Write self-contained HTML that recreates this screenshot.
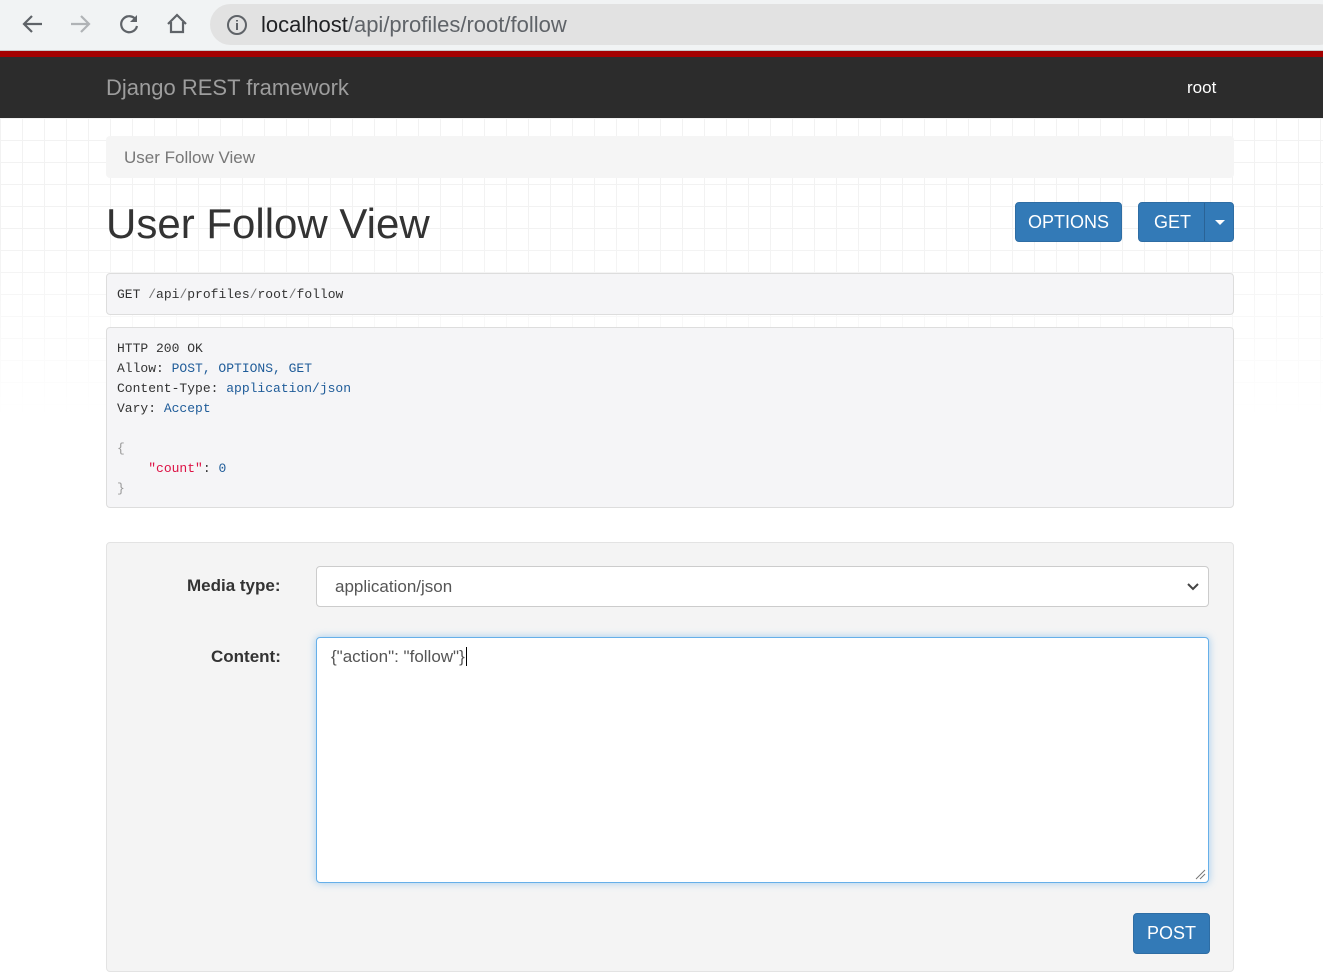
<!DOCTYPE html>
<html><head><meta charset="utf-8"><style>
*{box-sizing:border-box}
body{margin:0;width:1323px;height:963px;overflow:hidden;font-family:"Liberation Sans",Arial,sans-serif;background:#fff;position:relative}
.chrome{position:absolute;left:0;top:0;width:1323px;height:51px;background:#f1f3f4;border-bottom:1px solid #c8c8c8}
.url{position:absolute;left:210px;top:4px;width:1130px;height:41px;border-radius:21px;background:#e2e2e2}
.url span{position:absolute;left:51px;top:8px;font-size:22px;color:#5f6368}
.url b{font-weight:normal;color:#202124}
.red{position:absolute;top:51px;left:0;width:1323px;height:6px;background:#a30000}
.nav{position:absolute;top:57px;left:0;width:1323px;height:61px;background:#2c2c2c}
.grid{position:absolute;top:118px;left:0;width:1323px;height:300px;background-image:linear-gradient(#f2f2f2 1px,transparent 1px),linear-gradient(90deg,#f2f2f2 1px,transparent 1px);background-size:22px 22px;-webkit-mask-image:linear-gradient(#000 40%,transparent)}
.abs{position:absolute}
.btn{position:absolute;background:#337ab7;border:1px solid #2e6da4;border-radius:4px;color:#fff;font-size:18px;text-align:center}
pre{margin:0;font-family:"Liberation Mono","DejaVu Sans Mono",monospace;font-size:13px;line-height:20px;color:#333}
.b{color:#1f5c99}
</style></head><body>
<div class="chrome">
<svg class="abs" style="left:20px;top:12px" width="26" height="24" viewBox="0 0 26 24"><path d="M22 12H5M12 4l-8 8 8 8" stroke="#5f6368" stroke-width="2.2" fill="none"/></svg>
<svg class="abs" style="left:68px;top:12px" width="26" height="24" viewBox="0 0 26 24"><path d="M3 12h17M13 4l8 8-8 8" stroke="#b0b3b6" stroke-width="2.2" fill="none"/></svg>
<svg class="abs" style="left:117px;top:12px" width="24" height="24" viewBox="0 0 24 24"><path d="M19 8A8 8 0 1 0 20 14" stroke="#5f6368" stroke-width="2.2" fill="none"/><path d="M20 3v7h-7z" fill="#5f6368"/></svg>
<svg class="abs" style="left:164px;top:11px" width="26" height="26" viewBox="0 0 26 26"><path d="M4 13L13 4l9 9M7 11v10h12V11" stroke="#5f6368" stroke-width="2.2" fill="none"/></svg>
<div class="url"><svg class="abs" style="left:16px;top:10px" width="22" height="22" viewBox="0 0 22 22"><circle cx="11" cy="11" r="9" stroke="#5f6368" stroke-width="2" fill="none"/><path d="M11 9v7M11 6v1.5" stroke="#5f6368" stroke-width="2"/></svg><span><b>localhost</b>/api/profiles/root/follow</span></div>
</div>
<div class="red"></div>
<div class="nav"><div class="abs" style="left:106px;top:18px;font-size:22px;color:#9d9d9d">Django REST framework</div><div class="abs" style="left:1187px;top:21px;font-size:17px;color:#fff">root</div></div>
<div class="grid"></div>
<div class="abs" style="left:106px;top:136px;width:1128px;height:42px;background:#f5f5f5;border-radius:4px;font-size:17px;color:#777;padding:12px 18px">User Follow View</div>
<div class="abs" style="left:106px;top:200px;font-size:42px;color:#333">User Follow View</div>
<div class="btn" style="left:1015px;top:202px;width:107px;height:40px;line-height:38px">OPTIONS</div>
<div class="btn" style="left:1138px;top:202px;width:96px;height:40px;line-height:38px;text-align:left;padding-left:15px">GET<span style="position:absolute;left:65px;top:0;height:38px;border-left:1px solid #2a6396"></span><span style="position:absolute;left:76px;top:17px;border:5px solid transparent;border-top-color:#fff;border-bottom:0"></span></div>
<div class="abs" style="left:106px;top:273px;width:1128px;height:42px;background:#f5f5f7;border:1px solid #ddd;border-radius:4px;padding:11px 10px"><pre>GET <span style="color:#777">/</span>api<span style="color:#777">/</span>profiles<span style="color:#777">/</span>root<span style="color:#777">/</span>follow</pre></div>
<div class="abs" style="left:106px;top:327px;width:1128px;height:181px;background:#f5f5f7;border:1px solid #ddd;border-radius:4px;padding:11px 10px"><pre>HTTP 200 OK
Allow: <span class="b">POST, OPTIONS, GET</span>
Content-Type: <span class="b">application/json</span>
Vary: <span class="b">Accept</span>

<span style="color:#999">{</span>
    <span style="color:#dd1144">"count"</span>: <span class="b">0</span>
<span style="color:#999">}</span></pre></div>
<div class="abs" style="left:106px;top:542px;width:1128px;height:430px;background:#f4f4f4;border:1px solid #e3e3e3;border-radius:4px">
<div class="abs" style="left:80px;top:33px;font-size:17px;font-weight:bold;color:#333">Media type:</div>
<div class="abs" style="left:209px;top:23px;width:893px;height:41px;background:#fff;border:1px solid #ccc;border-radius:4px;font-size:17px;color:#555;padding:10px 18px">application/json<svg class="abs" style="right:8px;top:15px" width="14" height="10" viewBox="0 0 14 10"><path d="M2 2l5 5 5-5" stroke="#444" stroke-width="2" fill="none"/></svg></div>
<div class="abs" style="left:104px;top:104px;font-size:17px;font-weight:bold;color:#333">Content:</div>
<div class="abs" style="left:209px;top:94px;width:893px;height:246px;background:#fff;border:1px solid #66afe9;border-radius:4px;box-shadow:0 0 8px rgba(102,175,233,.6);font-size:17px;color:#555;padding:9px 14px">{"action": "follow"}<span style="border-left:1px solid #000;margin-left:1px"></span><svg class="abs" style="right:2px;bottom:2px" width="12" height="12"><path d="M11 2L2 11M11 6L6 11" stroke="#777"/></svg></div>
<div class="btn" style="left:1026px;top:370px;width:77px;height:41px;line-height:39px">POST</div>
</div>
</body></html>
